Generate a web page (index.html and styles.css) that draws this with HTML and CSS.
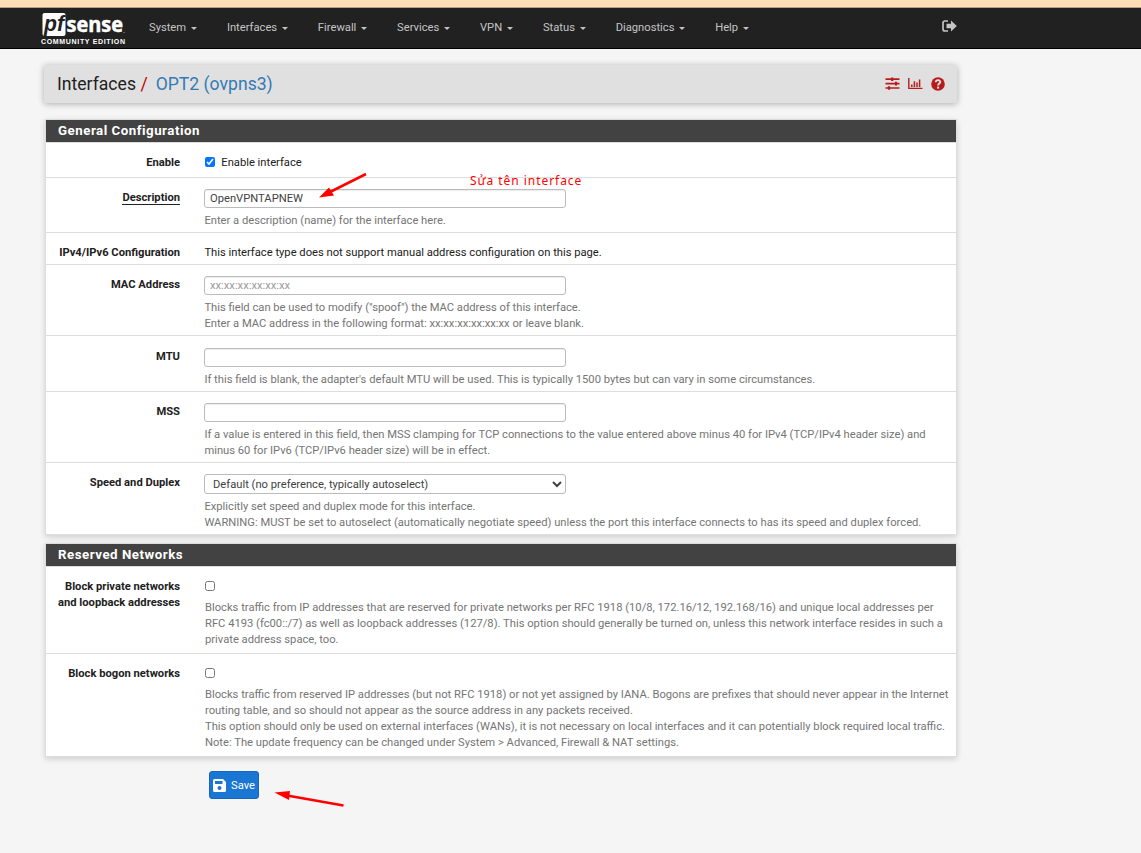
FILE: index.html
```html
<!DOCTYPE html>
<html lang="en">
<head>
<meta charset="utf-8">
<title>Interfaces / OPT2 (ovpns3)</title>
<link rel="stylesheet" href="styles.css">
</head>
<body>
<div class="top-strip"></div>
<nav class="navbar">
  <a class="brand">
    <svg class="logo" viewBox="0 0 86 32">
      <rect x="1.500" y="0" width="23" height="23" rx="2" fill="#fff"/>
      <text class="logo-pf" x="3" y="18" textLength="20" lengthAdjust="spacingAndGlyphs">pf</text>
      <text class="logo-name" x="25.500" y="18.500" textLength="56.500" lengthAdjust="spacingAndGlyphs">sense</text>
      <rect x="82.500" y="19" width="1" height="1" fill="#999"/>
      <text class="edition" x="0" y="31" textLength="84" lengthAdjust="spacing">COMMUNITY EDITION</text>
    </svg>
  </a>
  <ul class="menu">
    <li>System<i class="caret"></i></li>
    <li>Interfaces<i class="caret"></i></li>
    <li>Firewall<i class="caret"></i></li>
    <li>Services<i class="caret"></i></li>
    <li>VPN<i class="caret"></i></li>
    <li>Status<i class="caret"></i></li>
    <li>Diagnostics<i class="caret"></i></li>
    <li>Help<i class="caret"></i></li>
  </ul>
  <svg class="logout" viewBox="0 0 15 12"><path d="M6 1H3Q1 1 1 3V9Q1 11 3 11H6" fill="none" stroke="#c4c4c4" stroke-width="1.7"/><path d="M4.5 3.700H9V.5L14.8 6 9 11.500V8.300H4.5z" fill="#c4c4c4"/></svg>
</nav>

<header class="page-header">
  <h1>Interfaces<span class="slash">/</span><a>OPT2 (ovpns3)</a></h1>
  <div class="tools">
    <svg width="15" height="13" viewBox="0 0 15 13"><path d="M.5 2.2H14.5M.5 6.6H14.5M.5 11H14.5" stroke="#b71c1c" stroke-width="1.7"/><path d="M7.2.5V4M11 4.8V8.4M4 9.2V12.8" stroke="#b71c1c" stroke-width="2.2"/></svg>
    <svg width="15" height="13" viewBox="0 0 15 13"><path d="M.8 1V11.4H14.5" fill="none" stroke="#b71c1c" stroke-width="1.4"/><path d="M3.8 10V7.5M6.4 10V4.2M9 10V5.5M11.6 10V2.5" stroke="#b71c1c" stroke-width="1.5"/></svg>
    <svg width="14" height="14" viewBox="0 0 14 14"><circle cx="7" cy="7" r="6.8" fill="#b71c1c"/><path d="M4.7 5.2C4.9 2.5 9.4 2.5 9.3 5.1 9.2 6.6 7.1 6.500 7.1 8.500" fill="none" stroke="#e0e0e0" stroke-width="1.9"/><rect x="6.1" y="9.6" width="2" height="2" fill="#e0e0e0"/></svg>
  </div>
</header>

<main>
  <section class="panel general">
    <h2>General Configuration</h2>
    <div class="row enable"><label>Enable</label><div class="field"><span class="check"><input type="checkbox" checked>Enable interface</span></div></div>
    <div class="row description"><label><u>Description</u></label><div class="field"><input class="control" type="text" value="OpenVPNTAPNEW"><p class="help">Enter a description (name) for the interface here.</p></div></div>
    <div class="row ip"><label>IPv4/IPv6 Configuration</label><div class="field">This interface type does not support manual address configuration on this page.</div></div>
    <div class="row mac"><label>MAC Address</label><div class="field"><input class="control" type="text" placeholder="xx:xx:xx:xx:xx:xx"><p class="help">This field can be used to modify ("spoof") the MAC address of this interface.<br>Enter a MAC address in the following format: xx:xx:xx:xx:xx:xx or leave blank.</p></div></div>
    <div class="row mtu"><label>MTU</label><div class="field"><input class="control" type="text"><p class="help">If this field is blank, the adapter's default MTU will be used. This is typically 1500 bytes but can vary in some circumstances.</p></div></div>
    <div class="row mss"><label>MSS</label><div class="field"><input class="control" type="text"><p class="help">If a value is entered in this field, then MSS clamping for TCP connections to the value entered above minus 40 for IPv4 (TCP/IPv4 header size) and<br>minus 60 for IPv6 (TCP/IPv6 header size) will be in effect.</p></div></div>
    <div class="row speed"><label>Speed and Duplex</label><div class="field"><select class="control"><option>Default (no preference, typically autoselect)</option></select><p class="help">Explicitly set speed and duplex mode for this interface.<br>WARNING: MUST be set to autoselect (automatically negotiate speed) unless the port this interface connects to has its speed and duplex forced.</p></div></div>
  </section>

  <section class="panel reserved">
    <h2>Reserved Networks</h2>
    <div class="row private"><label>Block private networks<br>and loopback addresses</label><div class="field"><span class="check"><input type="checkbox"></span><p class="help">Blocks traffic from IP addresses that are reserved for private networks per RFC 1918 (10/8, 172.16/12, 192.168/16) and unique local addresses per<br>RFC 4193 (fc00::/7) as well as loopback addresses (127/8). This option should generally be turned on, unless this network interface resides in such a<br>private address space, too.</p></div></div>
    <div class="row bogon"><label>Block bogon networks</label><div class="field"><span class="check"><input type="checkbox"></span><p class="help">Blocks traffic from reserved IP addresses (but not RFC 1918) or not yet assigned by IANA. Bogons are prefixes that should never appear in the Internet<br>routing table, and so should not appear as the source address in any packets received.<br>This option should only be used on external interfaces (WANs), it is not necessary on local interfaces and it can potentially block required local traffic.<br>Note: The update frequency can be changed under System &gt; Advanced, Firewall &amp; NAT settings.</p></div></div>
  </section>

  <button class="save"><svg width="13" height="13" viewBox="0 0 13 13"><path fill="#fff" fill-rule="evenodd" d="M1.5 0H10L13 3V11.5Q13 13 11.5 13H1.5Q0 13 0 11.5V1.5Q0 0 1.5 0zM2 2V5H9.5V2zM6.5 7A2 2 0 1 0 6.5 11 2 2 0 1 0 6.5 7z"/></svg>Save</button>
</main>

<div class="note">Sửa tên interface</div>
<svg class="arrows" viewBox="0 0 1141 853"><g fill="#f00" stroke="#f00"><path d="M366 174L330 192" stroke-width="2.6" fill="none"/><path d="M319 197.500L329 187.500 334 195.500z" stroke="none"/><path d="M343.500 805.500L287 795.500" stroke-width="2.6" fill="none"/><path d="M274.500 792.500L290 791 289 800z" stroke="none"/></g></svg>
</body>
</html>
```
FILE: styles.css
```css
* { box-sizing: border-box; }
body { margin: 0; height: 853px; overflow: hidden; background: #f5f5f5; color: #212121; font: 11.2px/16px Roboto, sans-serif; position: relative; }
h1, h2, p, ul { margin: 0; padding: 0; font-weight: 400; }

.top-strip { height: 8px; background: #ffdeb5; border-bottom: 1px solid #b99f85; }
.navbar { height: 41px; background: #212121; border-bottom: 1px solid #000; display: flex; align-items: flex-start; color: #c4c4c4; }
.brand { width: 149px; padding: 5px 0 0 41px; flex: none; }
.logo { display: block; width: 86px; height: 32px; overflow: visible; }
.logo-pf { font: italic 700 22px "Liberation Sans", sans-serif; fill: #212121; }
.logo-name { font: 700 21px "Open Sans", sans-serif; fill: #fff; stroke: #fff; stroke-width: .5px; }
.edition { font: 700 7px "Liberation Sans", sans-serif; fill: #fff; }
.menu { display: flex; list-style: none; gap: 29.75px; margin-top: 12px; width: 793px; flex: none; }
.menu li { display: flex; align-items: center; white-space: nowrap; }
.caret { border: 3px solid transparent; border-top-color: #c4c4c4; border-bottom: 0; margin: 0 0 0 5px; }
.logout { width: 15px; height: 12px; margin-top: 11.5px; flex: none; }

.page-header { width: 913px; height: 38px; margin: 16px 0 0 44px; padding: 0 12.5px 0 13px; background: #e0e0e0; border-radius: 2px; box-shadow: 0 1px 6px rgba(0, 0, 0, .3); display: flex; justify-content: space-between; align-items: center; }
.page-header h1 { font-size: 17.6px; line-height: 38px; }
.slash { color: #c00000; margin: 0 8px 0 4.4px; }
.page-header a { color: #337ab7; }
.tools { display: flex; gap: 8px; align-items: center; padding-bottom: 1px; }

main { padding: 16px 0 0 45px; }
.panel { width: 912px; background: #fff; border: 1px solid #ddd; box-shadow: 0 2px 6px rgba(0, 0, 0, .16); margin-bottom: 8px; }
.panel h2 { height: 23px; padding-left: 12px; background: #424242; color: #fff; border-bottom: 1px solid #ddd; font-size: 13.3px; line-height: 22px; font-weight: 700; letter-spacing: .51px; }
.row { display: flex; border-bottom: 1px solid #ddd; padding-top: 11px; }
.row:last-child { border-bottom: 0; }
.row label { width: 134px; flex: none; text-align: right; font-weight: 700; white-space: nowrap; padding-top: 1px; }
.row u { text-decoration: none; border-bottom: 1px solid #212121; }
.field { margin-left: 24.4px; white-space: nowrap; }
.help { color: #757575; margin-top: 5px; }
.control { display: block; width: 362px; height: 19px; margin-left: -.4px; padding: 0 5px; border: 1px solid #bbb; border-radius: 3px; background: #fff; color: #424242; font: 11.2px Roboto, sans-serif; box-shadow: inset 0 1px 1px rgba(0, 0, 0, .075); }
.control::placeholder { color: #999; }
select.control { height: 20px; padding: 0 4px; box-shadow: none; }
.check { display: flex; align-items: center; height: 16px; }
.check input { width: 10px; height: 10px; margin: 0 6.3px 0 .6px; }

.enable { height: 35px; }
.enable .check { padding-top: 1px; height: 17px; }
.enable .check input { margin-top: -2px; }
.description { height: 55px; }
.ip { height: 32px; }
.ip .field { padding-top: 1px; }
.mac { height: 71px; }
.mtu { height: 56px; padding-top: 12px; }
.mss { height: 71px; }
.speed { height: 71px; }
.private { height: 87px; }
.bogon { height: 102px; }
.reserved .help { padding-left: .6px; margin-top: 6px; font-size: 11.21px; }

.save { display: flex; align-items: center; gap: 5px; width: 50px; height: 28px; margin: 14px 0 0 164px; padding: 0 3px; border: 1px solid #1565c0; border-radius: 3px; background: #1976d2; color: #fff; font: 11.2px Roboto, sans-serif; }
.save svg { flex: none; }

.note { position: absolute; left: 470px; top: 172px; color: #f00; font: 12px/17px "Noto Sans", sans-serif; letter-spacing: .95px; white-space: nowrap; }
.arrows { position: absolute; left: 0; top: 0; width: 1141px; height: 853px; pointer-events: none; }
```
